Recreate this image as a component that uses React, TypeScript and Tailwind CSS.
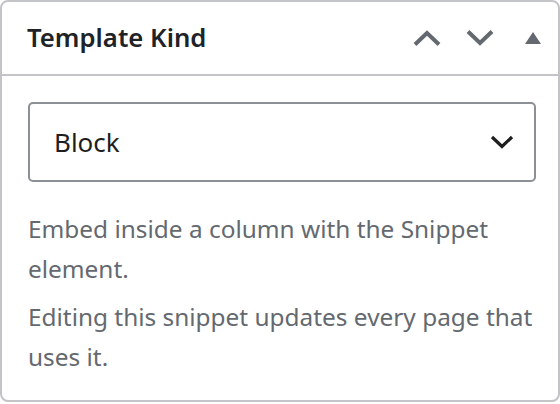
import React from "react";

const font = { fontFamily: '"Noto Sans", "Open Sans", sans-serif' };

const ChevronUp = () => (
  <svg width="28" height="16" viewBox="0 0 28 16" fill="none">
    <path d="M2 14.5 L14 3 L26 14.5" stroke="#646970" strokeWidth="4" />
  </svg>
);

const ChevronDown = () => (
  <svg width="28" height="16" viewBox="0 0 28 16" fill="none">
    <path d="M2 1.5 L14 13 L26 1.5" stroke="#646970" strokeWidth="4" />
  </svg>
);

const Triangle = () => (
  <svg width="16" height="12" viewBox="0 0 16 12">
    <path d="M8 0 L16 12 L0 12 Z" fill="#646970" />
  </svg>
);

export default function App() {
  return (
    <div className="w-[560px] h-[404px] bg-white" style={font}>
      <div className="h-[402px] border-2 border-[#c3c4c7] rounded-[8px] bg-white flex flex-col">
        {/* header */}
        <div className="h-[74px] flex items-center justify-between pl-[25px] pr-[17px] border-b-2 border-[#c3c4c7]">
          <h2 className="text-[25.7px] font-semibold text-[#1d2327]">Template Kind</h2>
          <div className="flex items-center">
            <ChevronUp />
            <div className="w-[25px]" />
            <ChevronDown />
            <div className="w-[31px]" />
            <Triangle />
          </div>
        </div>

        {/* body */}
        <div className="pt-[26px] pl-[26px] pr-[22px]">
          <div className="h-[80px] border-2 border-[#8c8f94] rounded-[5px] flex items-center justify-between pl-[24px] pr-[20px]">
            <span className="text-[26px] text-[#1e1e1e]">Block</span>
            <svg width="24" height="14" viewBox="0 0 24 14" fill="none">
              <path d="M2 2 L12 11.5 L22 2" stroke="#1e1e1e" strokeWidth="3.2" />
            </svg>
          </div>
          <div className="-mr-[20px]">
            <p className="mt-[27px] text-[24.4px] leading-[40px] text-[#646970]">
              Embed inside a column with the Snippet element.
            </p>
            <p className="mt-[8px] text-[24.4px] leading-[40px] text-[#646970]">
              Editing this snippet updates every page that uses it.
            </p>
          </div>
        </div>
      </div>
    </div>
  );
}
